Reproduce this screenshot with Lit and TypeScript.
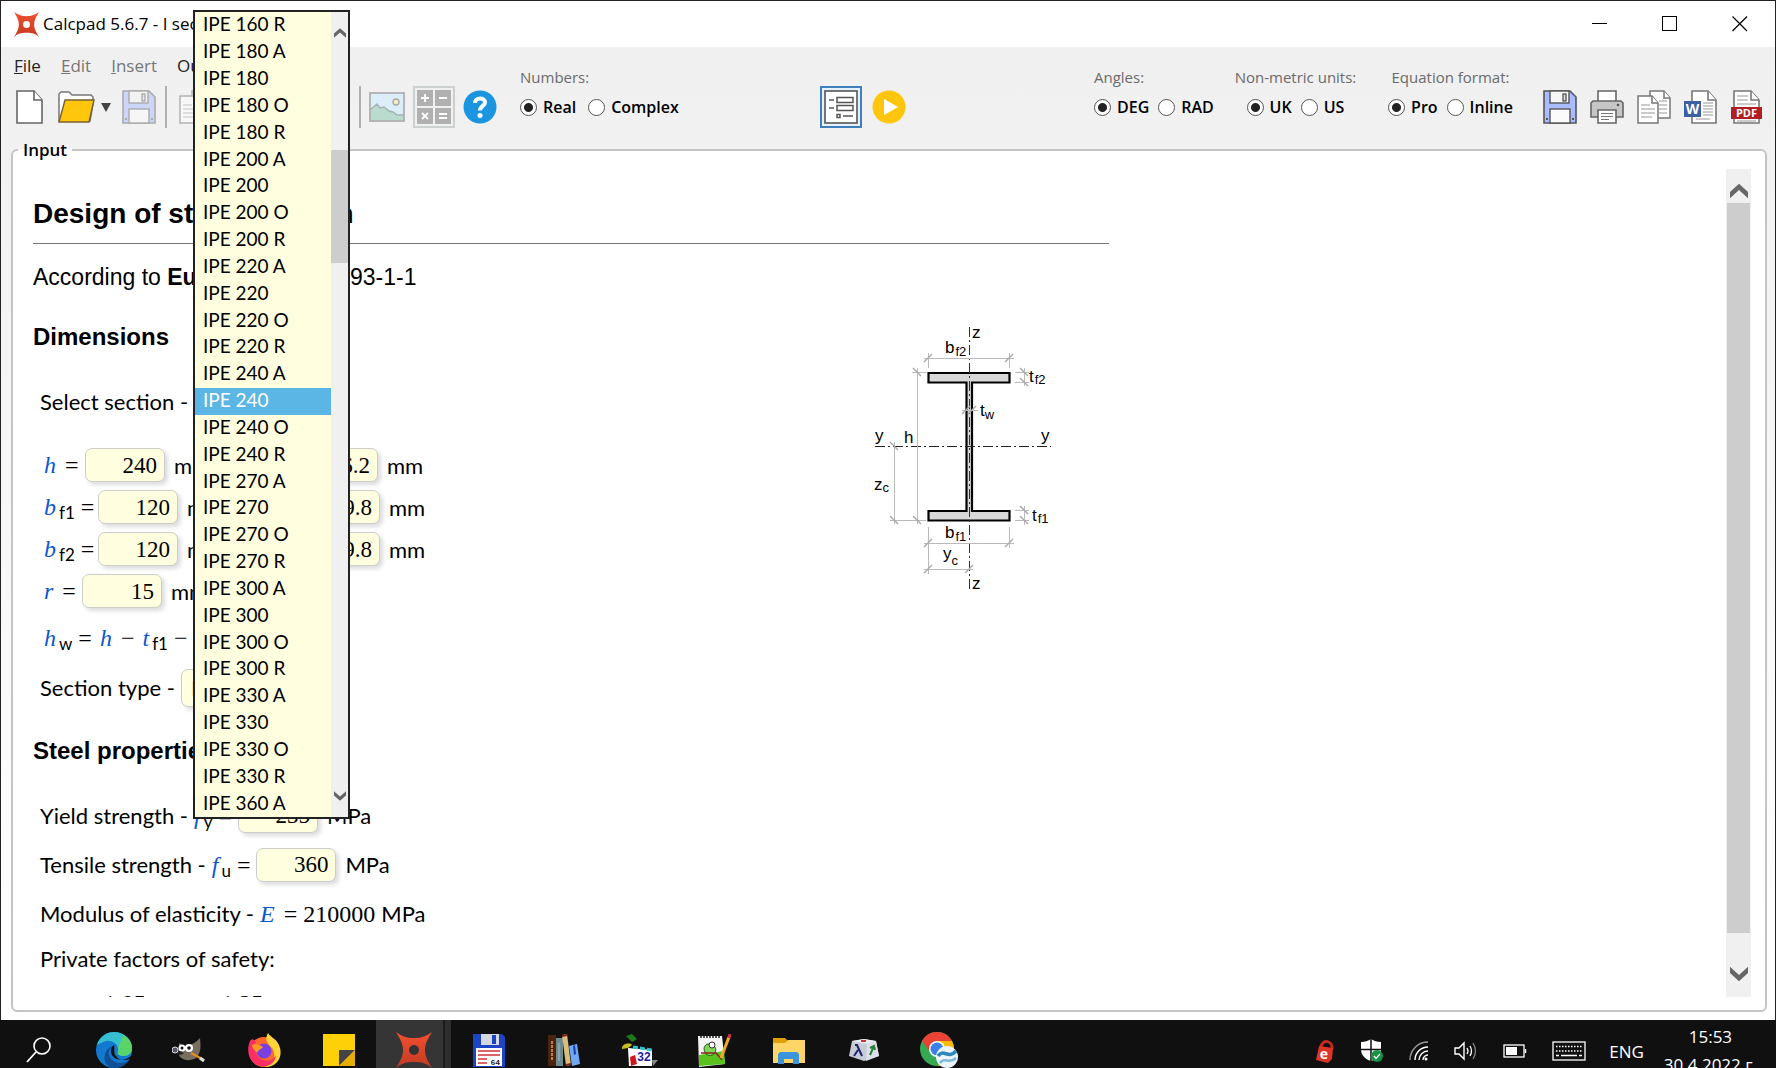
import { LitElement, html, svg, css, TemplateResult } from "lit";
import { customElement, state } from "lit/decorators.js";

const SECTIONS = [
  "IPE 160 R", "IPE 180 A", "IPE 180", "IPE 180 O", "IPE 180 R",
  "IPE 200 A", "IPE 200", "IPE 200 O", "IPE 200 R",
  "IPE 220 A", "IPE 220", "IPE 220 O", "IPE 220 R",
  "IPE 240 A", "IPE 240", "IPE 240 O", "IPE 240 R",
  "IPE 270 A", "IPE 270", "IPE 270 O", "IPE 270 R",
  "IPE 300 A", "IPE 300", "IPE 300 O", "IPE 300 R",
  "IPE 330 A", "IPE 330", "IPE 330 O", "IPE 330 R", "IPE 360 A",
];

const icon = (w: number, h: number, body: TemplateResult) =>
  html`<svg width=${w} height=${h} viewBox="0 0 ${w} ${h}" aria-hidden="true">${body}</svg>`;

const starIcon = (size: number, hole: string) => html`
  <svg width=${size} height=${size} viewBox="0 0 36 36" aria-hidden="true">
    <defs><linearGradient id="star" x1="0" y1="0" x2="0" y2="1">
      <stop offset="0" stop-color="#f4502f"/><stop offset="1" stop-color="#c33a22"/>
    </linearGradient></defs>
    <path d="M0 0C6 4 10 6 18 6C26 6 30 4 36 0C32 7 29 11 29 18C29 25 32 29 36 36C30 31 26 30 18 30C10 30 6 31 0 36C4 29 7 25 7 18C7 11 4 7 0 0Z" fill="url(#star)"/>
    <circle cx="18" cy="18" r="5" fill=${hole}/>
  </svg>`;

const newIcon = icon(28, 34, svg`
  <path d="M1 1H18L26 10V33H1Z" fill="#fff" stroke="#666" stroke-width="1.6"/>
  <path d="M18 1V10H26" fill="#fff" stroke="#666" stroke-width="1.6"/>`);

const openIcon = icon(37, 34, svg`
  <path d="M1 31V4L3 2H11L14 5H33L35 7V14L32 31Z" fill="#fff" stroke="#777" stroke-width="1.5"/>
  <path d="M7 10H36L31 32H1Z" fill="#ffc60d" stroke="#776030" stroke-width="1.4"/>`);

const saveIcon = (fill: string, line: string) => html`
  <svg width="34" height="34" viewBox="0 0 34 34" aria-hidden="true">
    <path d="M1 1H27L33 7V33H1Z" fill=${fill} stroke=${line} stroke-width="1.6"/>
    <rect x="7" y="1" width="19" height="12" fill="#f6f6f6" stroke=${line} stroke-width="1.4"/>
    <rect x="20" y="4" width="3" height="7" fill="#ddd" stroke=${line} stroke-width="1.3"/>
    <rect x="7" y="19" width="20" height="14" fill="#fbfbfb" stroke=${line} stroke-width="1.4"/>
    <path d="M3 29h2M29 29h2" stroke=${line} stroke-width="2"/>
  </svg>`;

const copyIcon = icon(34, 34, svg`
  <path d="M13 1H27L33 8V28H13Z" fill="#fff" stroke="#777" stroke-width="1.5"/>
  <path d="M27 1V8H33" fill="#fff" stroke="#777" stroke-width="1.5"/>
  <path d="M22 11H30M22 15H30M22 19H30M22 23H30" stroke="#bbb" stroke-width="1.4"/>
  <path d="M1 6H15L21 13V33H1Z" fill="#fff" stroke="#777" stroke-width="1.5"/>
  <path d="M15 6V13H21" fill="#fff" stroke="#777" stroke-width="1.5"/>
  <path d="M4 15H13M4 19H18M4 23H18M4 27H15" stroke="#bbb" stroke-width="1.4"/>`);

const undoIcon = icon(34, 34, svg`
  <path d="M8 14H20A7 7 0 0 1 20 28H12M14 8L8 14L14 20" fill="none" stroke="#aaa" stroke-width="3"/>`);
const redoIcon = icon(34, 34, svg`
  <path d="M26 14H14A7 7 0 0 0 14 28H22M20 8L26 14L20 20" fill="none" stroke="#aaa" stroke-width="3"/>`);

const imageIcon = icon(36, 30, svg`
  <rect x="1" y="1" width="34" height="28" fill="#dbeefa"/>
  <path d="M1 18L8 12L11 16L15 15L20 19L24 20L28 23H35V29H1Z" fill="#b9dccf"/>
  <path d="M1 18L8 12L11 16L15 15L20 19L24 20L28 23H35" fill="none" stroke="#a3b5b0" stroke-width="1.5"/>
  <circle cx="27" cy="10" r="3" fill="#f6ecc4" stroke="#aaa" stroke-width="1.3"/>
  <rect x="1" y="1" width="34" height="28" fill="none" stroke="#b0b0b0" stroke-width="1.8"/>`);

const calcIcon = icon(36, 36, svg`
  <path d="M1 1H17V17H1ZM19 1H35V17H19ZM1 19H17V35H1ZM19 19H35V35H19Z" fill="#b0b0b0"/>
  <path d="M9 5V13M5 9H13M23 9H31M6 24L12 30M12 24L6 30M23 25H31M23 29H31" stroke="#fff" stroke-width="1.8"/>`);

const helpIcon = icon(34, 34, svg`
  <circle cx="17" cy="17" r="16.5" fill="#1b95e0"/>
  <path d="M12 13C12 7 22 7 22 12.500C22 16 17 16 17 20.500" fill="none" stroke="#fff" stroke-width="4"/>
  <circle cx="17" cy="25.500" r="2.500" fill="#fff"/>`);

const formIcon = icon(34, 34, svg`
  <rect x="1" y="1" width="32" height="32" fill="#fff" stroke="#555" stroke-width="1.600"/>
  <path d="M5 10H10M5 18H10M19 26H29" stroke="#555" stroke-width="1.600"/>
  <path d="M13 7.500H29V12.500H13ZM13 15.500H29V20.500H13ZM13 24.500H16V27.500H13Z" fill="#fff" stroke="#555" stroke-width="1.500"/>`);

const playIcon = icon(34, 34, svg`
  <circle cx="17" cy="17" r="16.500" fill="#ffc60d"/>
  <path d="M12 9L26 17L12 25Z" fill="#fff"/>`);

const printIcon = icon(34, 34, svg`
  <path d="M8 1H26V12H8Z" fill="#fff" stroke="#666" stroke-width="1.600"/>
  <path d="M3 11H31L33 13V27H1V13Z" fill="#c6c6c6" stroke="#666" stroke-width="1.600"/>
  <circle cx="28" cy="15" r="1.300" fill="#555"/>
  <path d="M8 20H26V33H8Z" fill="#fff" stroke="#666" stroke-width="1.600"/>
  <path d="M11 23.500H23M11 26.500H23M11 29.500H19" stroke="#777" stroke-width="1.200"/>`);

const wordIcon = icon(34, 34, svg`
  <path d="M8 1H24L32 10V33H8Z" fill="#fff" stroke="#777" stroke-width="1.600"/>
  <path d="M24 1V10H32" fill="#fff" stroke="#777" stroke-width="1.600"/>
  <path d="M19 13H29M19 16H29M19 19H29M19 22H29M19 25H29M12 29H26" stroke="#bbb" stroke-width="1.300"/>
  <rect x="0" y="11" width="17" height="16" fill="#3c5f9f"/>
  <text x="8.500" y="24" text-anchor="middle" class="badge">W</text>`);

const pdfIcon = icon(32, 34, svg`
  <path d="M3 1H20L28 10V33H3Z" fill="#fff" stroke="#777" stroke-width="1.600"/>
  <path d="M20 1V10H28" fill="#fff" stroke="#777" stroke-width="1.600"/>
  <path d="M6 6H17M6 10H17M6 14H25M6 31H25" stroke="#bbb" stroke-width="1.300"/>
  <rect x="0" y="17" width="31" height="12" fill="#b01e24"/>
  <text x="15.500" y="27" text-anchor="middle" class="badge small">PDF</text>`);

/* Chevron used by both scrollbars */
const chevron = (up: boolean, w: number) => html`
  <svg width=${w} height=${w} viewBox="0 0 20 20" aria-hidden="true">
    <path d=${up ? "M0 18V11L10 2L20 11V18L10 9Z" : "M0 2V9L10 18L20 9V2L10 11Z"} fill="#666"/>
  </svg>`;

const edgeIcon = icon(36, 36, svg`
  <circle cx="18" cy="18" r="18" fill="#1379ce"/>
  <path d="M1 13C4 4 11 0 18 0C28 0 36 7 36 16C36 24 28 25 23 23C20 21 23 20 22 16C21 11 15 8 10 9C6 10 3 12 1 13Z" fill="#35bfd0"/>
  <path d="M27 3C33 6 36 11 36 16C36 24 28 25 23 23C20 21 24 20 22 15C24 11 26 7 27 3Z" fill="#58d46b"/>
  <path d="M17 14C10 18 12 30 24 31C29 31 32 29 34 27C31 32 26 36 18 36C11 36 7 29 9 22C10 18 13 15 17 14Z" fill="#0f4f96"/>
  <path d="M18 13C14 15 13 24 21 27C27 29 32 27 36 23L37 26L34 27C28 29 22 28 20 24C17 21 19 17 18 13Z" fill="#101010"/>`);

const gimpIcon = icon(34, 34, svg`
  <path d="M7 10L12 13C17 12 22 12 28 5C29 14 29 20 24 25C17 29 9 27 7 22Z" fill="#776e60"/>
  <path d="M3 17C8 15 9 19 12 20C9 23 5 22 3 19Z" fill="#222"/>
  <circle cx="3" cy="17" r="3" fill="#556" stroke="#ddd" stroke-width="1"/>
  <circle cx="10" cy="15" r="3.500" fill="#fff"/><circle cx="17" cy="15" r="4" fill="#fff"/>
  <circle cx="10" cy="15" r="1.500" fill="#111"/><circle cx="17" cy="15" r="1.800" fill="#111"/>
  <path d="M19 20L32 27" stroke="#e68a1e" stroke-width="2.500"/><path d="M28 25L32 28" stroke="#ddd" stroke-width="3"/>`);

const firefoxIcon = icon(34, 34, svg`
  <circle cx="17" cy="19" r="15" fill="#ff6a2b"/>
  <path d="M21 0C23 4 31 6 33 15C36 27 27 35 17 34C27 31 30 23 25 15C21 11 17 7 21 0Z" fill="#ffd43a"/>
  <path d="M3 8C6 4 7 8 9 8C6 14 8 22 14 26C20 30 27 27 29 22C28 31 20 35 13 33C4 31-2 20 3 8Z" fill="#fb2f63"/>
  <circle cx="17" cy="18" r="7.500" fill="#7a3fe0"/>
  <path d="M5 12C9 10 13 12 16 14C14 17 11 16 11 19C8 19 5 15 5 12Z" fill="#ff9a25"/>`);

const stickyIcon = icon(34, 34, svg`
  <path d="M1 1H33V33H1Z" fill="#fdd007"/><path d="M17 33V17H33Z" fill="#444"/><path d="M17 33L33 17V33Z" fill="#e6ad04"/>`);

const floppyIcon = icon(34, 34, svg`
  <path d="M1 1H30L33 4V34H1Z" fill="#1c44c4"/>
  <rect x="9" y="1" width="18" height="11" fill="#d5d8e0"/><rect x="20" y="2" width="4" height="9" fill="#1c44c4"/>
  <rect x="4" y="15" width="26" height="18" fill="#fff"/>
  <path d="M6 18H28M6 22H28M6 26H15M6 30H15" stroke="#d03038" stroke-width="1.300"/>
  <text x="28" y="32" text-anchor="end" class="tiny">64</text>`);

const booksIcon = icon(34, 34, svg`
  <rect x="1" y="2" width="8" height="31" fill="#4a2410"/><path d="M5 8V28" stroke="#c08040" stroke-width="2" stroke-dasharray="3 1"/>
  <rect x="9" y="5" width="7" height="28" fill="#6d8a8e"/><path d="M12 10V28" stroke="#a8bec0" stroke-width="1"/>
  <path d="M15 2L20 1L24 32L19 33Z" fill="#d9bd78"/><path d="M15 2L20 1V3L15 4ZM19 31L24 30V32L19 33Z" fill="#7a2018"/>
  <path d="M22 13L30 11L33 31L25 33Z" fill="#6fa8f5"/><path d="M26 13L28 12L29 21L27 22Z" fill="#1c3fae"/>`);

const cardIcon = icon(38, 34, svg`
  <path d="M6 3L12 1L17 6L12 9Z" fill="#1d7a18"/><path d="M2 16C1 11 10 9 12 12L8 15Z" fill="#c8c020"/>
  <path d="M8 15L32 17V33L9 33Z" fill="#fff"/><path d="M13 14L32 17" stroke="#29c4cc" stroke-width="3" stroke-dasharray="5 2"/>
  <text x="24" y="28" text-anchor="middle" class="num">32</text>
  <path d="M10 24L15 22L17 31L11 33Z" fill="#d01818"/><path d="M32 27H38L33 33Z" fill="#888"/>`);

const noteIcon = icon(34, 34, svg`
  <path d="M1 3H25L28 31L2 34Z" fill="#f4f4f4"/><path d="M3 4H24" stroke="#555" stroke-width="2" stroke-dasharray="2 1"/>
  <path d="M2 22L27 18L28 31L2 33Z" fill="#59c21c"/>
  <path d="M7 15C9 9 13 11 15 13C19 12 20 18 17 21C12 25 7 21 7 15Z" fill="#82d45a" stroke="#286020"/>
  <circle cx="15" cy="12" r="3" fill="#fff" stroke="#333"/><path d="M4 20H19L25 27" fill="none" stroke="#8d2020" stroke-width="1.300"/>
  <path d="M24 25L32 4" stroke="#eda927" stroke-width="3"/><path d="M32 5L33 1" stroke="#c33" stroke-width="3"/>`);

const folderIcon = icon(34, 34, svg`
  <path d="M1 5H13L16 8H33V30H1Z" fill="#e0a008"/><path d="M1 10H13L16 7H33V30H1Z" fill="#ffd567"/>
  <path d="M6 31V21L8 19H25L27 21V31H21V26H12V31Z" fill="#3b94dc"/>`);

const lambdaIcon = icon(32, 34, svg`
  <path d="M4 8L16 6L28 8L31 23L16 28L1 23Z" fill="#c6ccd6"/><path d="M4 8L16 6L28 8L19 11Z" fill="#e9ecf2"/>
  <path d="M19 11L28 8L31 23L18 28Z" fill="#dce0e8"/>
  <path d="M7 12L9 12L14 23M10 17L6 23" fill="none" stroke="#20246e" stroke-width="2"/>
  <path d="M22 22L26 13M22 15L26 13L27 17" fill="none" stroke="#28803c" stroke-width="2"/><path d="M13 8H18" stroke="#c33" stroke-width="2"/>`);

const chromeIcon = icon(38, 36, svg`
  <circle cx="17" cy="17" r="17" fill="#34a853"/>
  <path d="M2 9A17 17 0 0 1 32 9H17L10 20Z" fill="#ea4335"/><path d="M17 9H32A17 17 0 0 1 18 34L24 20Z" fill="#fbbc05"/>
  <circle cx="17" cy="17" r="8" fill="#fff"/><circle cx="17" cy="17" r="6.500" fill="#3b7fe8"/>
  <circle cx="27" cy="25" r="11" fill="#eef5fa"/>
  <path d="M18 24C24 16 28 28 36 19" fill="none" stroke="#2f86b8" stroke-width="3.500"/>
  <path d="M20 31C25 24 29 33 36 26" fill="none" stroke="#7db9d8" stroke-width="2.500"/>`);

const searchIcon = icon(26, 26, svg`
  <circle cx="16" cy="9" r="8" fill="none" stroke="#fff" stroke-width="1.600"/><path d="M10 15L1 25" stroke="#fff" stroke-width="1.800"/>`);

const lockIcon = icon(20, 24, svg`
  <path d="M6 8C7 0 18 1 17 10" fill="none" stroke="#c22a20" stroke-width="3"/>
  <path d="M4 7L18 9L17 20L13 24L1 21Z" fill="#dd3428"/><text x="9" y="20" text-anchor="middle" class="badge">e</text>`);

const shieldIcon = icon(24, 24, svg`
  <path d="M1 3C5 3 8 2 11 0C14 2 17 3 21 3V10C21 16 17 20 11 22C5 20 1 16 1 10Z" fill="#fff"/>
  <path d="M11 0V22M1 10.500H21" stroke="#101010" stroke-width="1.500"/>
  <circle cx="17" cy="17" r="6" fill="#149245"/><path d="M14 17L16 19.500L20 15" fill="none" stroke="#fff" stroke-width="1.300"/>`);

const wifiIcon = icon(20, 20, svg`
  <g fill="none" stroke-width="1.400"><path d="M1 19A18 18 0 0 1 19 1" stroke="#999"/><path d="M6 19A13 13 0 0 1 19 6M10 19A9 9 0 0 1 19 10M14 19A5 5 0 0 1 19 14" stroke="#fff"/></g>
  <circle cx="17" cy="18" r="1.500" fill="#fff"/>`);

const soundIcon = icon(24, 20, svg`
  <path d="M1 7H5L10 2V18L5 13H1Z" fill="none" stroke="#fff" stroke-width="1.400"/>
  <g fill="none" stroke-width="1.300"><path d="M13 7Q15 10 13 13M16 5Q19 10 16 15" stroke="#fff"/><path d="M19 2Q24 10 19 18" stroke="#888"/></g>`);

const batteryIcon = icon(24, 14, svg`
  <rect x="1" y="1" width="20" height="12" fill="none" stroke="#fff" stroke-width="1.300"/><rect x="3" y="3" width="11" height="8" fill="#fff"/><path d="M22.500 5V9" stroke="#fff" stroke-width="1.500"/>`);

const keyboardIcon = icon(34, 20, svg`
  <rect x="1" y="1" width="32" height="18" fill="none" stroke="#fff" stroke-width="1.300"/>
  <path d="M4 5.500H30M4 10H30" stroke="#fff" stroke-width="1.500" stroke-dasharray="1.500 1.500"/><path d="M4 14.500H7M9 14.500H25M27 14.500H30" stroke="#fff" stroke-width="1.300"/>`);

/* Cross-section of the I beam with its dimension lines */
const tick = (x: number, y: number) => svg`<path d="M${x - 4} ${y + 4}L${x + 4} ${y - 4}" stroke="#aaa" stroke-width="1.5"/>`;
const tickBack = (x: number, y: number) => svg`<path d="M${x - 4} ${y - 4}L${x + 4} ${y + 4}" stroke="#aaa" stroke-width="1.5"/>`;

const beamDrawing = html`
  <svg width="210" height="290" viewBox="0 0 210 290" role="img" aria-label="I section">
    <path d="M68.500 63H149.500V72.500H112V201H149.500V210.500H68.500V201H106.500V72.500H68.500Z" fill="#d8d8d8" stroke="#000" stroke-width="2.200"/>
    <path d="M109.500 17V280" stroke="#333" stroke-width="1" stroke-dasharray="10 3 2 3"/>
    <path d="M15 136.500H191" stroke="#222" stroke-width="1" stroke-dasharray="10 3 2 3"/>
    <g stroke="#bbb" stroke-width="1" fill="none">
      <path d="M64 48.500H154M68.500 43V58M149.500 43V58"/>
      <path d="M52 62.500H66M57.500 58V214M30 210.500H66M34.500 132V214"/>
      <path d="M64 233.500H154M68.500 217V264M149.500 217V238M64 259.500H113"/>
      <path d="M155 62.500H169M155 72.500H169M164.500 58V76M155 200.500H169M155 210.500H169M164.500 196V215M102 100.500H118"/>
    </g>
    ${tick(68, 48)}${tick(149, 48)}${tickBack(57, 62)}${tickBack(57, 210)}${tickBack(34, 136)}${tickBack(34, 210)}
    ${tick(68, 233)}${tick(149, 233)}${tick(68, 259)}${tick(109, 259)}
    ${tickBack(164, 62)}${tickBack(164, 72)}${tickBack(164, 200)}${tickBack(164, 210)}${tick(106, 100)}${tick(112, 100)}
    <g class="dim">
      <text x="112" y="28">z</text><text x="112" y="279">z</text>
      <text x="15" y="131">y</text><text x="181" y="131">y</text><text x="44" y="133">h</text>
      <text x="85" y="43">b<tspan class="dimsub" dx="1" dy="3">f2</tspan></text>
      <text x="85" y="228">b<tspan class="dimsub" dx="1" dy="3">f1</tspan></text>
      <text x="169" y="72">t<tspan class="dimsub" dx="1" dy="2">f2</tspan></text>
      <text x="172" y="211">t<tspan class="dimsub" dx="1" dy="2">f1</tspan></text>
      <text x="120" y="106">t<tspan class="dimsub" dy="3">w</tspan></text>
      <text x="14" y="180">z<tspan class="dimsub" dy="2">c</tspan></text>
      <text x="83" y="249">y<tspan class="dimsub" dy="6">c</tspan></text>
    </g>
  </svg>`;

@customElement("app-root")
export class AppRoot extends LitElement {
  @state() private section = "IPE 240";

  static styles = css`
    :host {
      display: flex; flex-direction: column; height: 100vh; overflow: hidden; position: relative;
      font-family: "Open Sans", "Noto Sans", sans-serif; font-size: 16px; color: #000; background: #101010;
    }
    * { box-sizing: border-box; }
    svg { display: block; flex: none; }
    button { border: 0; padding: 0; background: none; font: inherit; color: inherit; display: flex; align-items: center; justify-content: center; }
    .window {
      flex: 1; min-height: 0; display: flex; flex-direction: column;
      border: 1px solid #222; border-bottom: 0; background: linear-gradient(#efefef, #ffffff);
    }
    .titlebar { display: flex; align-items: center; height: 46px; background: #fff; padding-left: 13px; }
    .title { flex: 1; margin: 0 0 0 4px; font-size: 17px; font-weight: 400; line-height: 24px; }
    .caption { width: 70px; height: 44px; }
    .ribbon { display: flex; height: 90px; padding-left: 15px; padding-right: 12px; }
    .left { width: 504px; }
    .menu { display: flex; gap: 20px; height: 36px; align-items: center; color: #777; font-size: 17px; margin-left: -2px; }
    .menu button.on { color: #222; }
    .tools { display: flex; align-items: center; height: 42px; margin-top: 3px; gap: 8px; }
    .files { display: flex; align-items: center; margin-right: 4px; }
    .new { margin-right: 14px; }
    .drop { margin: 0 10px 0 5px; }
    .faded { opacity: 0.5; }
    .sep { width: 2px; height: 42px; background: #b0b0b0; }
    .files .sep { margin-left: 9px; }
    .sep.far { margin-left: 12px; }
    .frame { width: 42px; height: 42px; border: 2px solid #ccd0d0; }
    .frame.active { border: 2px solid #3f80bc; background: #e5f1fb; }
    .modes { display: flex; align-items: center; gap: 10px; height: 42px; margin-top: 39px; }
    .group { padding: 17px 0 0; display: flex; flex-direction: column; }
    .group.centered { align-items: center; }
    .numbers { width: 300px; }
    .settings { display: flex; margin-left: auto; }
    .angles { width: 124px; }
    .centered { width: 155px; }
    .label { font-size: 15px; line-height: 26px; color: #6b6b6b; white-space: nowrap; }
    .radios { display: flex; gap: 9px; align-items: center; margin-top: 4px; font-weight: 600; line-height: 26px; }
    .numbers .radios { gap: 12px; }
    .radios label { display: flex; align-items: center; gap: 6px; }
    .radios input {
      appearance: none; width: 17px; height: 17px; margin: 0; border: 1px solid #555; border-radius: 50%; background: #fff;
    }
    .radios input:checked { background: radial-gradient(circle, #222 0 4px, #fff 5px); }
    .export { display: flex; gap: 13px; align-items: center; height: 42px; margin-top: 39px; margin-left: 15px; }
    .badge { font: 700 14px "Open Sans", sans-serif; fill: #fff; }
    .badge.small { font-size: 11px; }
    .tiny { font: 700 8px "Liberation Mono", monospace; fill: #222; }
    .num { font: 700 12px "Liberation Sans", sans-serif; fill: #1c1c9c; }

    .panel {
      flex: 1; min-height: 0; min-width: 0; margin: 0 8px 8px 10px; padding: 6px 14px 13px 20px; display: flex;
      border: 2px solid #c4c4c4; border-radius: 6px; background: #fff;
    }
    .legend { margin-left: -15px; padding: 0 5px; line-height: 26px; font-size: 17px; font-weight: 600; }
    .view { flex: 1; min-width: 0; overflow: hidden; }
    .doc { max-width: 1076px; padding-top: 20px; font-family: Lato, "Open Sans", sans-serif; font-size: 22px; }
    h1, h2, .intro { font-family: "Liberation Sans", Arial, sans-serif; margin: 0; white-space: nowrap; }
    h1 { font-size: 28px; line-height: 50px; padding-bottom: 4px; border-bottom: 1px solid #777; }
    h2 { font-size: 24px; line-height: 32px; margin-top: 23px; }
    .intro { font-size: 23px; line-height: 32px; margin-top: 17px; }
    .body { display: flex; justify-content: space-between; }
    .first { margin-top: 28px; }
    .figure { margin: 17px 39px 0 0; }
    .dim { font: 17px "Liberation Sans", Arial, sans-serif; }
    .dimsub { font-size: 13px; }
    .row { display: flex; align-items: center; height: 49px; padding-left: 7px; white-space: nowrap; gap: 6px; }
    .lead { margin-top: 24px; }
    .dims { margin: 18px 0 5px; }
    .dims .row { height: 42px; padding-left: 11px; }
    .eqn { padding-left: 11px; height: 42px; margin-bottom: 4px; gap: 8px; }
    .short { height: 40px; }
    .part { display: flex; align-items: center; width: 194px; }
    .part.second { width: auto; }
    .sym { display: block; font-family: "Liberation Serif", serif; font-size: 24px; line-height: 32px; }
    .w38 { min-width: 38px; } .w41 { min-width: 41px; } .w54 { min-width: 54px; } .w57 { min-width: 56px; }
    .var { font-style: italic; color: #0b57cf; margin-right: 3px; }
    .sub { font: 17px Lato, sans-serif; position: relative; top: 4px; }
    .num-in, .pick {
      height: 34px; border: 1px solid #ccc; border-radius: 7px; background: #ffffdf; color: #000;
      box-shadow: 3px 3px 4px #ddd; font: 23px "Liberation Serif", serif;
    }
    .num-in { width: 80px; padding: 1px 7px 0; text-align: right; }
    .pick { width: 148px; height: 38px; padding: 0 9px; font: 22px Lato, sans-serif; appearance: none; }
    .unit { margin-left: 9px; }
    .unit.tight { margin-left: 3px; }

    .bar { display: flex; flex-direction: column; width: 25px; background: #f0f0f0; padding: 0 1px; }
    .bar button { height: 34px; flex: none; align-items: flex-end; padding-bottom: 3px; }
    .bar button.down { align-items: flex-start; padding: 2px 0 0; }
    .thumb { flex: 24; background: #cdcdcd; }
    .rest { flex: 1; }

    .popup {
      position: absolute; left: 193px; top: 10px; width: 157px; display: flex;
      border: 2px solid #222; background: #ffffdf; font-family: Lato, sans-serif; font-size: 19px;
    }
    .options { flex: 1; height: 805px; margin: 0; padding: 0; list-style: none; display: grid; grid-auto-rows: 1fr; }
    .option { display: flex; align-items: center; padding: 0 0 2px 8px; line-height: 24px; min-height: 0; white-space: nowrap; }
    .option.chosen { background: #5bb5e5; color: #fff; }
    .side { width: 17px; display: flex; flex-direction: column; background: #f0f0f0; }
    .side button { height: 42px; flex: none; }
    .side .before { flex: 96; } .side .mid { flex: 113; background: #cdcdcd; } .side .after { flex: 512; }

    .taskbar { flex: none; height: 48px; display: flex; align-items: flex-start; overflow: hidden; background: #101010; color: #fff; padding-left: 1px; }
    .app { width: 75px; height: 60px; flex: none; }
    .app.current { background: linear-gradient(90deg, #353535 67px, #1c1c1c 67px, #1c1c1c 69px, #2d2d2d 69px); }
    .tray { margin-left: auto; display: flex; align-items: center; height: 62px; gap: 25px; padding-right: 19px; }
    .lang { font-size: 17px; margin-left: -2px; }
    .clock { margin: 0 0 0 -5px; text-align: center; line-height: 28px; font-size: 17px; white-space: nowrap; }
  `;

  private symbol(name: string, sub = "", tail = " =", cls = "") {
    return html`<span class="sym ${cls}"><span class="var">${name}</span>${sub ? html`<span class="sub">${sub}</span>` : ""}${tail}</span>`;
  }

  private field(label: string, value: string) {
    return html`<input class="num-in" aria-label=${label} .value=${value} />`;
  }

  private radios(name: string, items: string[]) {
    return html`<div class="radios">${items.map((t, i) => html`
      <label><input type="radio" name=${name} ?checked=${i === 0} />${t}</label>`)}</div>`;
  }

  private group(label: string, name: string, items: string[], cls: string) {
    return html`<div class="group ${cls}" role="radiogroup" aria-label=${label}>
      <span class="label">${label}</span>${this.radios(name, items)}</div>`;
  }

  private tool(label: string, body: TemplateResult, cls = "") {
    return html`<button class=${cls} aria-label=${label}>${body}</button>`;
  }

  render() {
    return html`
      <div class="window">
        <header class="titlebar">
          ${starIcon(25, "#fff")}
          <p class="title">Calcpad 5.6.7 - I section</p>
          ${this.tool("Minimize", icon(16, 16, svg`<path d="M0 7.500H15" stroke="#000"/>`), "caption")}
          ${this.tool("Maximize", icon(16, 16, svg`<rect x="0.500" y="0.500" width="14" height="14" fill="none" stroke="#000"/>`), "caption")}
          ${this.tool("Close", icon(16, 16, svg`<path d="M0.500 0.500L15 15M15 0.500L0.500 15" stroke="#000" stroke-width="1.200"/>`), "caption")}
        </header>

        <div class="ribbon">
          <div class="left">
            <nav class="menu">
              <button class="on"><span><u>F</u>ile</span></button>
              <button><span><u>E</u>dit</span></button>
              <button><span><u>I</u>nsert</span></button>
              <button class="on">Output</button>
            </nav>
            <div class="tools">
              <div class="files">
                ${this.tool("New", newIcon, "new")}
                ${this.tool("Open", openIcon)}
                ${this.tool("Recent files", icon(12, 12, svg`<path d="M1 2H11L6 11Z" fill="#444"/>`), "drop")}
                ${this.tool("Save", saveIcon("#a9bcff", "#666"), "faded")}
                <span class="sep"></span>
              </div>
              ${this.tool("Copy", copyIcon, "faded")}
              ${this.tool("Paste", copyIcon, "faded")}
              ${this.tool("Undo", undoIcon)}
              ${this.tool("Redo", redoIcon)}
              <span class="sep far"></span>
              ${this.tool("Image", imageIcon)}
              ${this.tool("Keypad", calcIcon, "frame")}
              ${this.tool("Help", helpIcon)}
            </div>
          </div>
          ${this.group("Numbers:", "numbers", ["Real", "Complex"], "numbers")}
          <div class="modes">
            ${this.tool("Input form", formIcon, "frame active")}
            ${this.tool("Calculate", playIcon)}
          </div>
          <div class="settings">
            ${this.group("Angles:", "angles", ["DEG", "RAD"], "angles")}
            ${this.group("Non-metric units:", "units", ["UK", "US"], "centered")}
            ${this.group("Equation format:", "format", ["Pro", "Inline"], "centered")}
          </div>
          <div class="export">
            ${this.tool("Save output", saveIcon("#a9bcff", "#555"))}
            ${this.tool("Print", printIcon)}
            ${this.tool("Copy output", copyIcon)}
            ${this.tool("Open in Word", wordIcon)}
            ${this.tool("Export to PDF", pdfIcon)}
          </div>
        </div>

        <fieldset class="panel">
          <legend class="legend">Input</legend>
          <div class="view">
            <main class="doc">
              <h1>Design of steel I section</h1>
              <p class="intro">According to <b>Eurocode</b>: EN 1993-1-1</p>
              <div class="body">
                <div>
                  <h2 class="first">Dimensions</h2>
                  <div class="row lead">
                    <label for="section">Select section -</label>
                    <select id="section" class="pick"><option>${this.section}</option></select>
                  </div>
                  <div class="dims">
                    <div class="row">
                      <div class="part">${this.symbol("h", "", " =", "w41")}${this.field("h", "240")}<span class="unit">mm</span></div>
                      <div class="part second">${this.symbol("t", "w", " =", "w54")}${this.field("tw", "6.2")}<span class="unit">mm</span></div>
                    </div>
                    <div class="row">
                      <div class="part">${this.symbol("b", "f1", " =", "w54")}${this.field("bf1", "120")}<span class="unit">mm</span></div>
                      <div class="part second">${this.symbol("t", "f1", " =", "w57")}${this.field("tf1", "9.8")}<span class="unit">mm</span></div>
                    </div>
                    <div class="row">
                      <div class="part">${this.symbol("b", "f2", " =", "w54")}${this.field("bf2", "120")}<span class="unit">mm</span></div>
                      <div class="part second">${this.symbol("t", "f2", " =", "w57")}${this.field("tf2", "9.8")}<span class="unit">mm</span></div>
                    </div>
                    <div class="row">
                      <div class="part">${this.symbol("r", "", " =", "w38")}${this.field("r", "15")}<span class="unit">mm</span></div>
                    </div>
                  </div>
                  <div class="row eqn">
                    ${this.symbol("h", "w", " =")}${this.symbol("h", "", " −")}${this.symbol("t", "f1", " −")}${this.symbol("t", "f2", "")}
                  </div>
                  <div class="row">
                    <label for="type">Section type -</label>
                    <select id="type" class="pick"><option>Rolled</option></select>
                  </div>
                  <h2>Steel properties</h2>
                  <div class="row lead">
                    Yield strength - ${this.symbol("f", "y")}${this.field("Yield strength", "235")}<span class="unit tight">MPa</span>
                  </div>
                  <div class="row">
                    Tensile strength - ${this.symbol("f", "u")}${this.field("Tensile strength", "360")}<span class="unit tight">MPa</span>
                  </div>
                  <div class="row">
                    Modulus of elasticity - ${this.symbol("E", "", " = 210000")}<span>MPa</span>
                  </div>
                  <div class="row short">Private factors of safety:</div>
                  <div class="row">
                    ${this.symbol("γ", "M0", " = 1.05,")}${this.symbol("γ", "M2", " = 1.25")}
                  </div>
                </div>
                <div class="figure">${beamDrawing}</div>
              </div>
            </main>
          </div>
          <div class="bar">
            <button aria-label="Scroll up">${chevron(true, 18)}</button>
            <div class="thumb"></div><div class="rest"></div>
            <button class="down" aria-label="Scroll down">${chevron(false, 18)}</button>
          </div>
        </fieldset>
      </div>

      <div class="popup">
        <ul class="options" role="listbox" aria-label="Sections">
          ${SECTIONS.map((s) => html`<li role="option" class="option ${s === this.section ? "chosen" : ""}"
            aria-selected=${s === this.section} @click=${() => (this.section = s)}>${s}</li>`)}
        </ul>
        <div class="side">
          <button aria-label="Scroll list up">${chevron(true, 12)}</button>
          <div class="before"></div><div class="mid"></div><div class="after"></div>
          <button aria-label="Scroll list down">${chevron(false, 12)}</button>
        </div>
      </div>

      <footer class="taskbar">
        ${this.tool("Search", searchIcon, "app")}
        ${this.tool("Edge", edgeIcon, "app")}
        ${this.tool("GIMP", gimpIcon, "app")}
        ${this.tool("Firefox", firefoxIcon, "app")}
        ${this.tool("Sticky Notes", stickyIcon, "app")}
        ${this.tool("Calcpad", starIcon(36, "#333"), "app current")}
        ${this.tool("Total Commander", floppyIcon, "app")}
        ${this.tool("Calibre", booksIcon, "app")}
        ${this.tool("Cards", cardIcon, "app")}
        ${this.tool("Notepad++", noteIcon, "app")}
        ${this.tool("Explorer", folderIcon, "app")}
        ${this.tool("Lambda", lambdaIcon, "app")}
        ${this.tool("Chrome", chromeIcon, "app")}
        <div class="tray">
          ${lockIcon}${shieldIcon}${wifiIcon}${soundIcon}${batteryIcon}${keyboardIcon}
          <span class="lang">ENG</span>
          <div class="clock">15:53<br />30.4.2022 г.</div>
        </div>
      </footer>
    `;
  }
}
